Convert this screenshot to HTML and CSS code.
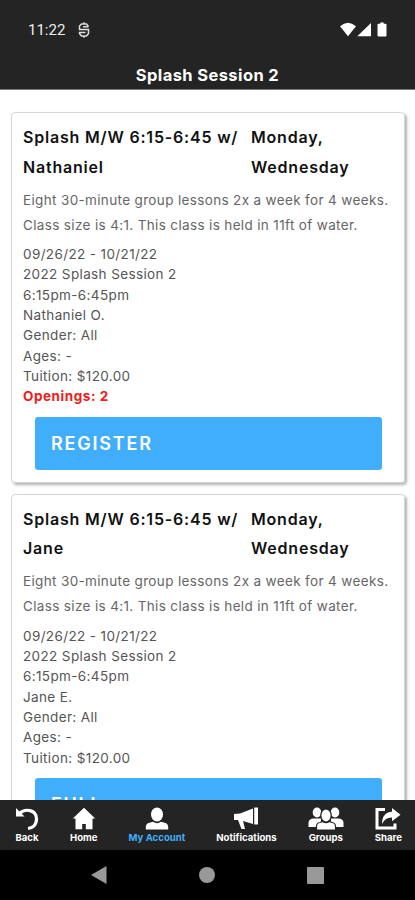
FILE: index.html
```html
<!DOCTYPE html>
<html lang="en">
<head>
    <meta charset="UTF-8">
    <meta name="viewport" content="width=device-width, initial-scale=1.0">
    <title>Splash Session 2</title>
    <link rel="stylesheet" href="styles.css">
</head>
<body>
    <!-- Header -->
    <header class="header">
        <div class="status-bar">
            <span class="time">11:22</span>
            <svg class="status-app" width="12" height="16" viewBox="0 0 12 16" fill="none" stroke="#ddd" stroke-width="1.5">
                <path d="M10.500 4.500L8.500 2H3.500L1.500 4V7.500H10.500V11.500L8.500 14H3.500L1.500 11.500V10.500H7.500M10.500 4.800H5M6 .3V2M6 14V15.700"/>
            </svg>
            <svg class="status-icons" width="48" height="16" viewBox="0 0 48 16" fill="#fff">
                <path d="M0 4.200Q8-2.800 16 4.200L8 14.300Z"/>
                <path d="M31 1V14.300H17.300Z"/>
                <path d="M40.300 1.700V.5H43.700V1.700H45.500Q46.500 1.700 46.500 2.700V13.500Q46.500 14.500 45.500 14.500H38.500Q37.500 14.500 37.500 13.500V2.700Q37.500 1.700 38.500 1.700Z"/>
            </svg>
        </div>
        <h1>Splash Session 2</h1>
    </header>

    <!-- Class List -->
    <main class="class-list">
        <div class="card">
            <div class="card-title">
                <h2>Splash M/W 6:15-6:45 w/ Nathaniel</h2>
                <h2 class="days">Monday, Wednesday</h2>
            </div>
            <p class="description">Eight 30-minute group lessons 2x a week for 4 weeks.<br>Class size is 4:1. This class is held in 11ft of water.</p>
            <ul class="details">
                <li>09/26/22 - 10/21/22</li>
                <li>2022 Splash Session 2</li>
                <li>6:15pm-6:45pm</li>
                <li>Nathaniel O.</li>
                <li>Gender: All</li>
                <li>Ages: -</li>
                <li>Tuition: $120.00</li>
                <li class="openings">Openings: 2</li>
            </ul>
            <button>REGISTER</button>
        </div>

        <div class="card">
            <div class="card-title">
                <h2>Splash M/W 6:15-6:45 w/ Jane</h2>
                <h2 class="days">Monday, Wednesday</h2>
            </div>
            <p class="description">Eight 30-minute group lessons 2x a week for 4 weeks.<br>Class size is 4:1. This class is held in 11ft of water.</p>
            <ul class="details">
                <li>09/26/22 - 10/21/22</li>
                <li>2022 Splash Session 2</li>
                <li>6:15pm-6:45pm</li>
                <li>Jane E.</li>
                <li>Gender: All</li>
                <li>Ages: -</li>
                <li>Tuition: $120.00</li>
            </ul>
            <button>FULL</button>
        </div>
    </main>

    <!-- Tab Bar -->
    <nav class="tab-bar">
        <a class="tab">
            <svg width="24" height="24" viewBox="0 0 24 24" fill="none" stroke="#fff" stroke-width="3.200">
                <path d="M4.500 6.500C10 1 21.500 2.500 21.500 12C21.500 18 17.500 21 13 21.500"/>
                <path d="M1 1V9.500H9.500Z" fill="#fff" stroke="none"/>
            </svg>
            <span>Back</span>
        </a>
        <a class="tab">
            <svg width="24" height="24" viewBox="0 0 24 24" fill="#fff">
                <path d="M12 .8L23.200 11.500H20.500V22.300H13.800V17H10.200V22.300H3.500V11.500H.8Z"/>
            </svg>
            <span>Home</span>
        </a>
        <a class="tab active">
            <svg width="24" height="24" viewBox="0 0 24 24" fill="#fff">
                <ellipse cx="12" cy="7.500" rx="6" ry="7"/>
                <path d="M.8 22.500V20Q.8 16.500 4.500 15.800L8 14.800Q12 17.500 16 14.800L19.500 15.800Q23.200 16.500 23.200 20V22.500Z"/>
            </svg>
            <span>My Account</span>
        </a>
        <a class="tab">
            <svg width="24" height="24" viewBox="0 0 24 24" fill="#fff">
                <path d="M0 7L6 6.500L19 1.500V17L9 14L11 22H7.500L4 13H0Z"/>
                <path d="M20.200 .5H24V17.500H20.200Z"/>
            </svg>
            <span>Notifications</span>
        </a>
        <a class="tab">
            <svg width="36" height="24" viewBox="0 0 36 24" fill="#fff">
                <ellipse cx="9" cy="5.500" rx="4.300" ry="5"/>
                <ellipse cx="27" cy="5.500" rx="4.300" ry="5"/>
                <path d="M.5 20V16Q.5 12 5 11.500H13V20ZM35.500 20V16Q35.500 12 31 11.500H23V20Z"/>
                <g stroke="#242424" stroke-width="1.200">
                    <ellipse cx="18" cy="8.500" rx="5.200" ry="6.500"/>
                    <path d="M8.500 23V19.500Q8.500 16 12 15.500L14.500 14.500Q18 17 21.500 14.500L24 15.500Q27.500 16 27.500 19.500V23Z"/>
                </g>
            </svg>
            <span>Groups</span>
        </a>
        <a class="tab">
            <svg width="26" height="24" viewBox="0 0 26 24" fill="#fff">
                <path d="M10 2.500H2V21H20V16.500" fill="none" stroke="#fff" stroke-width="3"/>
                <path d="M17 1L25.500 7.800L17 14.200V10.600Q10.500 10.300 7 17Q7 5.500 17 4.800Z"/>
            </svg>
            <span>Share</span>
        </a>
    </nav>

    <!-- System Navigation -->
    <div class="system-nav">
        <svg width="16" height="18" viewBox="0 0 16 18"><path d="M15.500 0V18L0 9Z"/></svg>
        <svg width="16" height="16" viewBox="0 0 16 16"><circle cx="8" cy="8" r="8"/></svg>
        <svg width="17" height="17" viewBox="0 0 17 17"><rect width="17" height="17" rx="1"/></svg>
    </div>
</body>
</html>
```
FILE: styles.css
```css
/* Reset */
* {
    margin: 0;
    padding: 0;
    box-sizing: border-box;
}
body {
    font-family: Inter, sans-serif;
    background-color: #fff;
    height: 100vh;
    display: flex;
    flex-direction: column;
    overflow: hidden;
}

/* Header */
.header {
    height: 90px;
    flex-shrink: 0;
    background-color: #242424;
    border-bottom: 1px solid #777;
    color: #fff;
}
.status-bar {
    display: flex;
    align-items: center;
    height: 60px;
    padding: 0 27px 0 28px;
}
.time {
    width: 50px;
    font-family: Roboto, sans-serif;
    font-size: 15px;
    color: #eee;
}
.status-icons {
    margin-left: auto;
}
h1 {
    font-size: 16.5px;
    line-height: 31px;
    font-weight: 700;
    letter-spacing: 0.4px;
    text-align: center;
}

/* Class Cards */
.class-list {
    flex: 1;
    min-height: 0;
    overflow: hidden;
    padding: 22px 10px 0 11px;
}
.card {
    height: 371px;
    padding: 10px 10px 10px 11px;
    margin-bottom: 10.5px;
    border: 1px solid #d5d5d5;
    border-radius: 4px;
    box-shadow: 2px 2px 3px rgba(0, 0, 0, 0.3);
}
.card-title {
    display: grid;
    grid-template-columns: 228px 1fr;
}
h2 {
    font-size: 16px;
    line-height: 29.5px;
    font-weight: 600;
    letter-spacing: 0.8px;
    color: #111;
}
.description {
    margin-top: 5.5px;
    font-size: 13.5px;
    line-height: 25px;
    letter-spacing: 0.35px;
    white-space: nowrap;
    color: #666;
}
.details {
    margin-top: 6.5px;
    list-style: none;
    font-size: 13.5px;
    line-height: 20.35px;
    letter-spacing: 0.37px;
    color: #555;
}
.openings {
    font-weight: 700;
    letter-spacing: 0.55px;
    color: #f21b1b;
}
button {
    display: block;
    width: 347px;
    height: 53px;
    margin: 10px 0 0 12px;
    padding-left: 16px;
    background-color: #40aefb;
    border: none;
    border-radius: 3px;
    color: #fff;
    font-family: inherit;
    font-size: 18px;
    font-weight: 600;
    letter-spacing: 1.8px;
    text-align: left;
}

/* Tab Bar */
.tab-bar {
    height: 50px;
    flex-shrink: 0;
    display: flex;
    justify-content: space-between;
    padding: 7px 13px 0 15px;
    background-color: #242424;
    color: #fff;
}
.tab {
    display: flex;
    flex-direction: column;
    align-items: center;
    font-size: 9.6px;
    line-height: 14px;
    font-weight: 700;
}
.active {
    color: #40aefb;
}

/* System Navigation */
.system-nav {
    height: 50px;
    flex-shrink: 0;
    display: flex;
    justify-content: space-between;
    align-items: center;
    padding: 0 91px;
    background-color: #000;
    fill: #999;
}
```
